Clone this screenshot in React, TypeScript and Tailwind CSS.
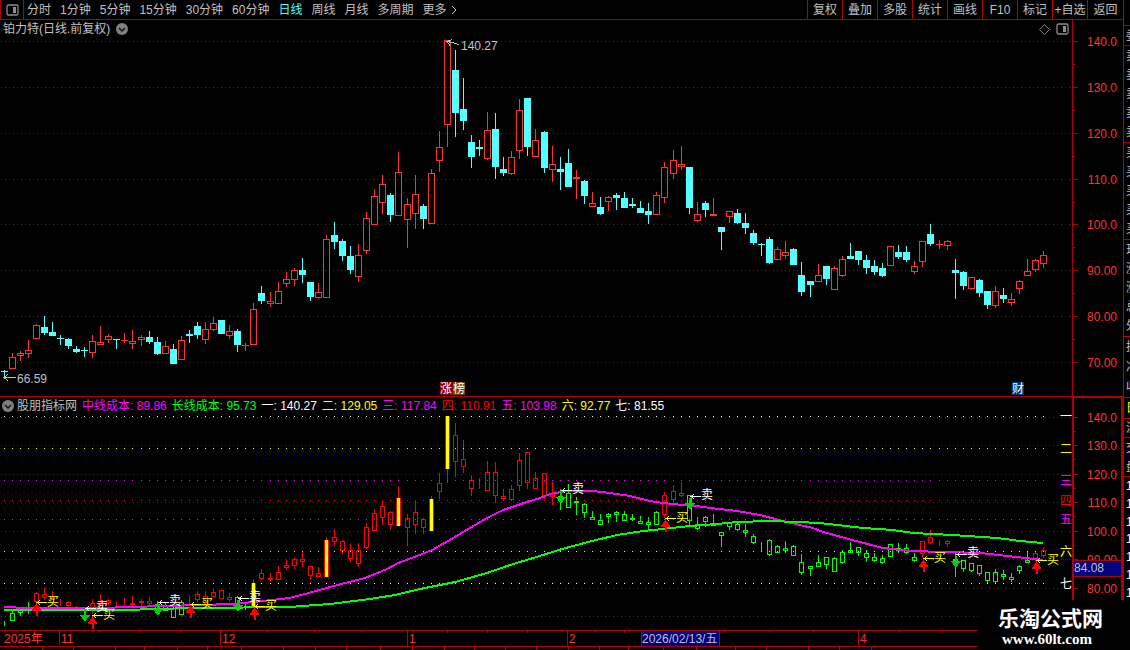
import { useState } from 'react';

type Candle = ['u' | 'd', number, number, number, number];

// direction, high, body top, body bottom, low (chart rows, top = 140.27)
const candles: Candle[] = [
  ['d', 370, 371, 371, 377], ['u', 353, 357, 368, 368], ['u', 351, 353, 355, 360], ['u', 340, 350, 353, 357],
  ['u', 324, 325, 338, 338], ['d', 316, 327, 332, 334], ['d', 322, 332, 335, 335], ['d', 335, 338, 338, 344],
  ['d', 338, 339, 345, 348], ['d', 346, 349, 351, 352], ['d', 347, 350, 350, 356], ['u', 335, 341, 352, 357],
  ['u', 326, 342, 344, 344], ['u', 334, 336, 339, 342], ['d', 339, 339, 339, 348], ['u', 333, 340, 340, 342],
  ['u', 330, 341, 343, 348], ['u', 335, 337, 339, 345], ['d', 331, 337, 341, 343], ['d', 337, 342, 353, 354],
  ['u', 341, 346, 353, 353], ['d', 344, 349, 363, 363], ['u', 336, 340, 359, 359], ['d', 330, 334, 335, 342],
  ['d', 322, 326, 334, 338], ['u', 322, 329, 339, 343], ['u', 317, 323, 329, 330], ['d', 320, 320, 333, 333],
  ['u', 325, 331, 335, 338], ['d', 329, 331, 344, 351], ['u', 343, 345, 345, 350], ['u', 303, 309, 344, 344],
  ['d', 286, 293, 300, 303], ['u', 292, 301, 303, 306], ['u', 282, 291, 303, 303], ['u', 272, 279, 283, 286],
  ['u', 268, 270, 279, 285], ['d', 258, 270, 274, 282], ['d', 282, 282, 296, 300], ['u', 283, 292, 297, 298],
  ['u', 235, 239, 297, 297], ['d', 222, 235, 241, 248], ['d', 239, 241, 255, 260], ['d', 246, 256, 269, 273],
  ['u', 244, 255, 276, 281], ['u', 212, 218, 250, 253], ['u', 189, 196, 224, 224], ['u', 175, 184, 202, 213],
  ['d', 193, 195, 214, 221], ['u', 152, 172, 215, 215], ['u', 198, 204, 219, 247], ['u', 175, 194, 213, 228],
  ['d', 204, 206, 218, 228], ['u', 169, 173, 223, 223], ['u', 131, 147, 160, 171], ['u', 40, 40, 124, 146],
  ['d', 50, 70, 112, 136], ['d', 78, 109, 120, 129], ['d', 135, 142, 156, 167], ['d', 140, 147, 148, 155],
  ['u', 112, 130, 158, 159], ['d', 113, 129, 166, 178], ['d', 157, 169, 172, 175], ['u', 151, 157, 173, 174],
  ['u', 99, 110, 150, 158], ['d', 98, 98, 146, 155], ['u', 129, 140, 156, 156], ['d', 131, 132, 167, 172],
  ['u', 146, 164, 169, 181], ['d', 157, 169, 171, 189], ['d', 149, 163, 186, 186], ['u', 170, 177, 178, 198],
  ['d', 180, 181, 195, 203], ['u', 192, 203, 206, 206], ['d', 197, 207, 213, 214], ['u', 196, 197, 201, 210],
  ['d', 193, 195, 197, 209], ['d', 192, 198, 207, 207], ['d', 198, 204, 205, 207], ['d', 201, 208, 212, 212],
  ['d', 203, 211, 214, 223], ['u', 192, 195, 214, 214], ['u', 162, 167, 197, 202], ['u', 150, 160, 173, 178],
  ['u', 146, 164, 166, 169], ['d', 167, 167, 207, 213], ['u', 202, 214, 220, 221], ['d', 201, 203, 209, 216],
  ['u', 198, 214, 215, 215], ['d', 227, 227, 231, 249], ['u', 211, 211, 216, 222], ['d', 209, 213, 222, 223],
  ['d', 213, 223, 227, 233], ['d', 230, 233, 242, 244], ['d', 243, 244, 244, 255], ['d', 237, 239, 262, 263],
  ['u', 247, 249, 259, 259], ['u', 241, 252, 255, 258], ['d', 248, 249, 264, 264], ['d', 262, 275, 291, 295],
  ['d', 281, 281, 284, 296], ['u', 264, 275, 281, 281], ['d', 266, 266, 278, 284], ['u', 266, 268, 289, 289],
  ['u', 256, 259, 275, 276], ['d', 243, 256, 258, 258], ['d', 251, 251, 259, 264], ['d', 255, 260, 267, 273],
  ['d', 260, 266, 271, 274], ['d', 263, 268, 275, 276], ['u', 246, 246, 265, 265], ['d', 245, 252, 256, 258],
  ['d', 246, 252, 259, 261], ['u', 261, 266, 271, 273], ['u', 241, 241, 261, 266], ['d', 224, 234, 243, 245],
  ['u', 240, 244, 244, 248], ['u', 240, 241, 245, 249], ['d', 259, 270, 272, 298], ['d', 271, 272, 285, 289],
  ['u', 277, 277, 288, 289], ['d', 279, 280, 292, 296], ['d', 291, 291, 304, 308], ['u', 286, 291, 305, 307],
  ['d', 288, 295, 298, 302], ['u', 293, 299, 302, 305], ['u', 280, 281, 288, 293], ['u', 259, 271, 275, 275],
  ['u', 259, 260, 269, 271], ['u', 251, 255, 263, 267],
];

const candleX = (i: number) => Math.floor(4.03 + i * 8.0601);
const toIndicator = (y: number) => Math.round(417 + (y - 41) * 0.62);

// holding ranges, drawn red in the indicator, the rest is green
const holding = [[4, 9], [11, 18], [23, 28], [31, 68], [82, 84], [114, 117], [128, 129]];
const strong = [31, 40, 49, 53, 55];
const isHolding = (i: number) => holding.some(([a, b]) => i >= a && i <= b);

const priceTicks = [
  [41, '140.0'], [87, '130.0'], [133, '120.0'], [179, '110.0'],
  [224, '100.0'], [270, '90.00'], [316, '80.00'], [362, '70.00'],
] as const;

const indicatorTicks = [
  [417, '140.0'], [445, '130.0'], [474, '120.0'], [502, '110.0'],
  [531, '100.0'], [559, '90.00'], [588, '80.00'], [616, ''],
] as const;

const levels = [
  { name: '一', y: 416, color: '#ffffff' },
  { name: '二', y: 448, color: '#ffff00' },
  { name: '三', y: 480, color: '#ff00ff' },
  { name: '四', y: 500, color: '#ff0000' },
  { name: '五', y: 519, color: '#ff00ff' },
  { name: '六', y: 551, color: '#ffff00' },
  { name: '七', y: 583, color: '#ffffff' },
];

const legend = [
  { name: '中线成本', value: '89.86', className: 'text-[#ff00ff]' },
  { name: '长线成本', value: '95.73', className: 'text-[#00ff00]' },
  { name: '一', value: '140.27', className: 'text-white' },
  { name: '二', value: '129.05', className: 'text-[#ffff00]' },
  { name: '三', value: '117.84', className: 'text-[#ff00ff]' },
  { name: '四', value: '110.91', className: 'text-[#ff0000]' },
  { name: '五', value: '103.98', className: 'text-[#ff00ff]' },
  { name: '六', value: '92.77', className: 'text-[#ffff00]' },
  { name: '七', value: '81.55', className: 'text-white' },
];

const midLine =
  '4,607 12,607 20,608 100,608 130,607 200,605 232,604 253,602 272,600 289,598 305,594 323,589 345,583 365,578 387,569 398,563 417,556 432,550 455,537 463,532 487,518 503,510 527,502 540,498 550,494 567,491 593,491 610,493 630,496 650,501 663,503 683,505 697,506 710,508 737,511 760,515 783,521 813,528 820,531 852,540 883,548 910,551 980,553 1007,556 1043,560';
const longLine =
  '4,610 130,610 150,609 200,608 289,607 330,604 370,599 395,595 420,589 440,585 455,582 487,573 510,565 530,559 562,549 588,542 617,535 643,531 663,529 690,526 717,524 737,522 770,521 797,522 820,523 863,528 893,530 913,533 953,535 997,538 1020,541 1043,543';

// arrow tips
const buys = [[36, 603], [92, 616], [190, 605], [254, 607], [665, 519], [923, 559], [1036, 561]];
const sells = [[85, 621], [158, 615], [238, 611], [561, 503], [690, 509], [956, 567]];

const months = [[59, '11'], [220, '12'], [407, '1'], [567, '2'], [858, '4']] as const;
const weekTicks = [99, 140, 180, 267, 314, 361, 447, 487, 527, 595, 624, 724, 769, 813, 899, 942];
const tabTicks = [42, 73, 115, 144, 177, 207, 241, 283, 315, 346, 380, 412, 444, 474, 505, 536, 568, 599, 628, 663, 696, 735, 766, 808, 839, 871];

const periods = ['分时', '1分钟', '5分钟', '15分钟', '30分钟', '60分钟', '日线', '周线', '月线', '多周期'];
const tools = ['复权', '叠加', '多股', '统计', '画线', 'F10', '标记', '+自选', '返回'];

// quote column, only its first few pixels are visible
const quoteGroups = [
  { rows: '委', className: 'h-5' },
  { rows: '卖卖卖卖卖', className: 'h-[97px]' },
  { rows: '买买买买买', className: 'h-[97px]' },
  { rows: '现涨涨总外', className: 'h-[97px]' },
  { rows: '换净收', className: 'h-[61px]' },
  { rows: '日', className: 'h-[21px] text-[#ffff00]' },
  { rows: '流', className: 'h-[19px]' },
  { rows: '交盘', className: 'h-[39px]' },
  { rows: '1111111', className: 'h-[126px] text-white' },
];

const PanelIcon = () => (
  <svg width="13" height="12" viewBox="0 0 13 12" fill="none">
    <rect x="1" y="1" width="11" height="10" rx="1.5" stroke="#8c8c8c" strokeWidth="1.3" />
    <rect x="7" y="3" width="3" height="6" fill="#8c8c8c" />
  </svg>
);

const RoundChevron = () => (
  <svg width="12" height="12" viewBox="0 0 12 12" fill="none">
    <circle cx="6" cy="6" r="6" fill="#808080" />
    <path d="M3 5l3 3 3-3" stroke="#101010" strokeWidth="1.5" />
  </svg>
);

const Grid = ({ ys }: { ys: number[] }) => (
  <>
    {ys.map((y) => (
      <line key={y} x1="1" x2="1072" y1={y + 0.5} y2={y + 0.5} stroke="#a80000" strokeDasharray="1 3" />
    ))}
  </>
);

const PriceChart = () => (
  <svg viewBox="0 38 1123 358" className="block w-full overflow-visible text-xs" shapeRendering="crispEdges">
    <Grid ys={priceTicks.map((t) => t[0])} />
    <rect x="1072" y="38" width="1" height="358" fill="#b00000" />
    {priceTicks.map(([y, label]) => (
      <g key={y}>
        <rect x="1073" y={y} width="5" height="1" fill="#b00000" />
        {y < 362 && <rect x="1073" y={y + 23} width="2" height="1" fill="#b00000" />}
        <text x="1117" y={y + 5} textAnchor="end" fill="#ff3232">{label}</text>
      </g>
    ))}
    {candles.map(([dir, high, top, bottom, low], i) => {
      const x = candleX(i);
      const color = dir === 'u' ? '#ff3232' : '#54ffff';
      return (
        <g key={i}>
          <rect x={x} y={high} width="1" height={top - high} fill={color} />
          <rect x={x} y={bottom} width="1" height={low - bottom + 1} fill={color} />
          {dir === 'u' && bottom > top ? (
            <rect x={x - 2.5} y={top + 0.5} width="6" height={bottom - top} fill="none" stroke={color} />
          ) : (
            <rect x={x - 3} y={top} width="7" height={bottom - top + 1} fill={color} />
          )}
        </g>
      );
    })}
    <g stroke="#c0c0c0" fill="none">
      <path d="M4 377.5H16M8 374.5l-4 3 4 3" />
      <path d="M447 41.5l5 1 7 2M452 39.5l-5 2 3 4" />
    </g>
    <text x="17" y="383" fill="#c0c0c0">66.59</text>
    <text x="461" y="50" fill="#c0c0c0">140.27</text>
    <rect x="440" y="382" width="13" height="13" fill="#800000" />
    <rect x="453" y="382" width="12" height="13" fill="#804000" />
    <text x="440" y="393" fill="#ffffff">涨</text>
    <text x="453" y="393" fill="#ffffff">榜</text>
    <rect x="1012" y="382" width="12" height="13" fill="#003870" />
    <text x="1012" y="393" fill="#ffffff">财</text>
  </svg>
);

const IndicatorChart = () => (
  <svg viewBox="0 414 1123 236" className="block w-full overflow-visible text-xs" shapeRendering="crispEdges">
    <Grid ys={indicatorTicks.map((t) => t[0])} />
    {indicatorTicks.map(([y, label]) => (
      <g key={y}>
        <rect x="1074" y={y} width="4" height="1" fill="#b00000" />
        <rect x="1074" y={y + 14} width="2" height="1" fill="#b00000" />
        <text x="1117" y={y + 5} textAnchor="end" fill="#ff3232">{label}</text>
      </g>
    ))}
    {candles.map(([, h, t, b, l], i) => {
      const x = candleX(i);
      const [high, top, bottom, low] = [h, t, b, l].map(toIndicator);
      const color = isHolding(i) ? '#ff0000' : '#00ff00';
      return (
        <g key={i}>
          <rect x={x} y={high} width="1" height={top - high} fill={color} />
          <rect x={x} y={bottom} width="1" height={low - bottom + 1} fill={color} />
          <rect
            x={x - 1.5}
            y={top + 0.5}
            width="4"
            height={bottom - top}
            fill={strong.includes(i) ? '#ffff00' : 'none'}
            stroke={color}
          />
        </g>
      );
    })}
    {levels.map(({ name, y, color }) => (
      <g key={name} fill={color}>
        {candles.map((_, i) => (
          <rect key={i} x={candleX(i)} y={y} width="1" height="1" />
        ))}
        <text x="1060" y={y + 5}>{name}</text>
      </g>
    ))}
    <polyline points={midLine} fill="none" stroke="#ff00ff" strokeWidth="2" />
    <polyline points={longLine} fill="none" stroke="#00ff00" strokeWidth="2" />

    {strong.map((i) => {
      const top = toIndicator(candles[i][2]);
      const bottom = toIndicator(candles[i][3]);
      return <rect key={i} x={candleX(i) - 1} y={top} width="3" height={bottom - top + 1} fill="#ffff00" />;
    })}
    {buys.map(([x, y]) => (
      <g key={x}>
        <path d={`M${x + 0.5} ${y}l5 8h-4v5h-2v-5h-4z`} fill="#ff0000" />
        <path d={`M${x + 1} ${y - 0.5}h10M${x + 4} ${y - 2.5}l-3 2 3 2`} fill="none" stroke="#ffff00" />
        <text x={x + 11} y={y + 3} fill="#ffff00">买</text>
      </g>
    ))}
    {sells.map(([x, y]) => (
      <g key={x}>
        <path d={`M${x} ${y + 1}l-5-7h4v-5h2v5h4z`} fill="#00d200" />
        <path d={`M${x + 1} ${y - 12.5}h10M${x + 4} ${y - 14.5}l-3 2 3 2`} fill="none" stroke="#ffffff" />
        <text x={x + 11} y={y - 10} fill="#ffffff">卖</text>
      </g>
    ))}

    <rect x="1072" y="414" width="2" height="186" fill="#b00000" />
    <rect x="1121" y="414" width="2" height="186" fill="#b00000" />
    <rect x="1074" y="560" width="47" height="17" fill="#b00000" />
    <rect x="1074" y="561" width="47" height="15" fill="#000080" />
    <text x="1074" y="572" fill="#c0c0c0">84.08</text>

    {/* date axis */}
    <rect x="0" y="630" width="1123" height="1" fill="#b00000" />
    <rect x="0" y="646" width="1123" height="1" fill="#b00000" />
    <text x="4" y="643" fill="#ff3232">2025年</text>
    {months.map(([x, label]) => (
      <g key={x}>
        <rect x={x} y="631" width="1" height="15" fill="#b00000" />
        <text x={x + 2} y="643" fill="#ff3232">{label}</text>
      </g>
    ))}
    {weekTicks.map((x) => (
      <rect key={x} x={x} y="631" width="1" height="2" fill="#b00000" />
    ))}
    {tabTicks.map((x) => (
      <rect key={x} x={x} y="647" width="1" height="3" fill="#b00000" />
    ))}
    <rect x="641" y="631" width="79" height="15" fill="#b00000" />
    <rect x="642" y="631" width="77" height="15" fill="#000080" />
    <text x="642" y="643" fill="#c0c0c0">2026/02/13/五</text>
  </svg>
);

const App = () => {
  const [period, setPeriod] = useState('日线');

  return (
    <div className="relative flex overflow-hidden bg-black text-xs leading-4 text-[#c0c0c0] font-['Liberation_Sans','Noto_Sans_CJK_SC',sans-serif]">
      <main className="min-w-0 flex-1">
        <header className="flex h-5 items-stretch border-b border-[#b00000]">
          <button aria-label="切换面板" className="flex w-6 shrink-0 items-center justify-center border-x border-[#b00000]">
            <PanelIcon />
          </button>
          <nav className="flex flex-1 items-center gap-[9px] whitespace-nowrap pl-[3px]">
            {periods.map((name) => (
              <button
                key={name}
                onClick={() => setPeriod(name)}
                className={name === period ? 'text-[#54ffff]' : ''}
              >
                {name}
              </button>
            ))}
            <button className="flex items-center gap-1">
              更多
              <svg width="6" height="10" viewBox="0 0 6 10" fill="none" stroke="#c0c0c0">
                <path d="M1 1l4 4-4 4" />
              </svg>
            </button>
          </nav>
          <div className="flex whitespace-nowrap">
            {tools.map((name) => (
              <button key={name} className="w-[35px] border-l border-[#b00000] last:w-9">
                {name}
              </button>
            ))}
          </div>
        </header>

        <section>
          <div className="flex h-[18px]">
            <div className="flex flex-1 items-center gap-[6px] pl-[3px]">
              <h1>铂力特(日线.前复权)</h1>
              <button aria-label="展开">
                <RoundChevron />
              </button>
              <div className="ml-auto flex items-center gap-[6px] pr-[3px]">
                <svg width="11" height="11" viewBox="0 0 11 11" fill="none" stroke="#808080">
                  <path d="M5.5 0.5l5 5-5 5-5-5z" />
                </svg>
                <PanelIcon />
              </div>
            </div>
            <div className="w-[51px] border-l border-[#b00000]" />
          </div>
          <PriceChart />
        </section>

        <section>
          <div className="flex h-[18px] border-t border-[#b00000]">
            <div className="flex flex-1 items-center gap-[5px] whitespace-nowrap pl-[2px]">
              <div className="flex items-center gap-[3px]">
                <button aria-label="指标菜单">
                  <RoundChevron />
                </button>
                <h2>股朋指标网</h2>
              </div>
              {legend.map(({ name, value, className }) => (
                <span key={name} className={className}>
                  {name}: {value}
                </span>
              ))}
            </div>
            <div className="w-[51px] border-t border-r-2 border-l-2 border-[#b00000]" />
          </div>
          <IndicatorChart />
        </section>
      </main>

      <aside className="w-[7px] shrink-0 overflow-hidden border-l border-[#b00000] pt-[25px]">
        {quoteGroups.map(({ rows, className }) => (
          <div key={rows} className={`flex flex-col justify-around border-t border-[#b00000] pl-[2px] ${className}`}>
            {rows.split('').map((row, i) => (
              <span key={i}>{row}</span>
            ))}
          </div>
        ))}
      </aside>

      <footer className="absolute right-0 bottom-0 flex h-[50px] w-[152px] flex-col items-start bg-black pt-2 pl-5 text-white">
        <strong className="text-[21px] leading-[22px]">乐淘公式网</strong>
        <span className="pl-1 font-['Liberation_Serif',serif] text-[15px] leading-[18px] font-bold">www.60lt.com</span>
      </footer>
    </div>
  );
};

export default App;
